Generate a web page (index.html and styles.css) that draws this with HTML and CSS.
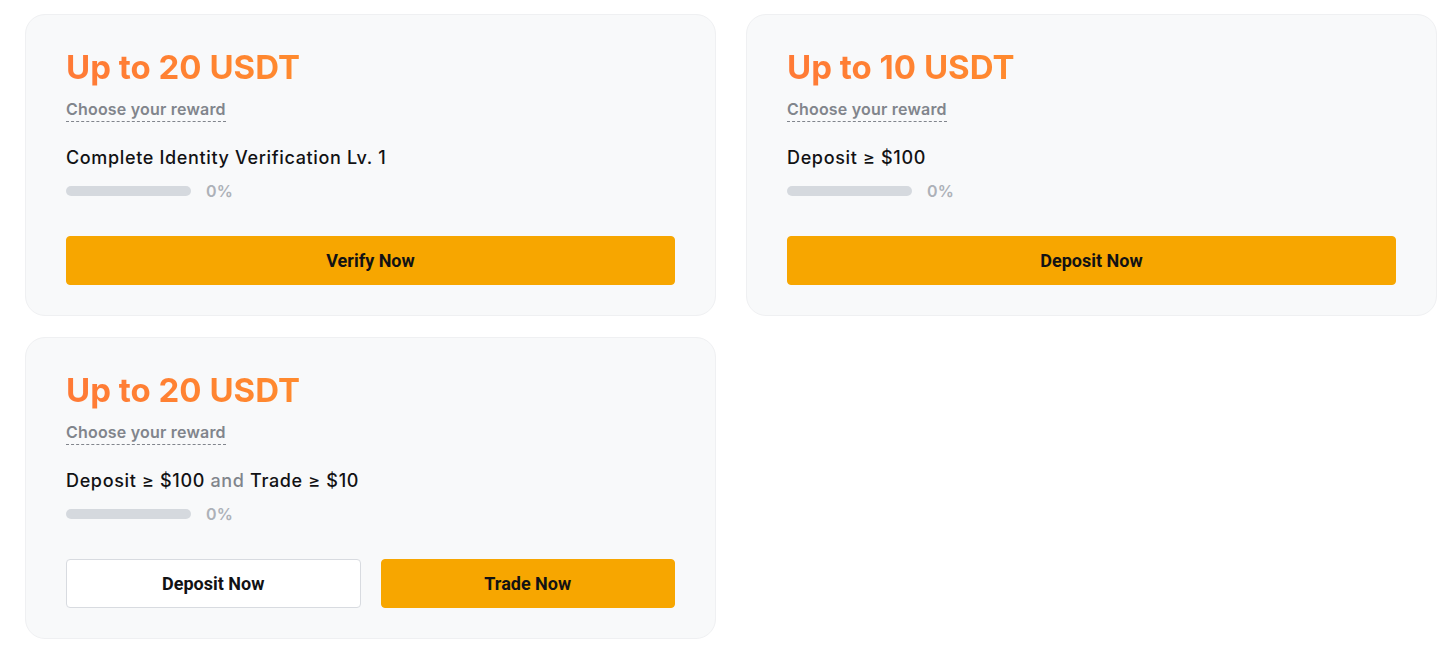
FILE: index.html
```html
<!DOCTYPE html>
<html lang="en">
<head>
<meta charset="utf-8">
<title>Rewards</title>
<link rel="stylesheet" href="styles.css">
</head>
<body>
<div class="grid">
  <section class="card">
    <h2 class="amount">Up to 20 USDT</h2>
    <div class="choose"><span>Choose your reward</span></div>
    <p class="task">Complete Identity Verification Lv. 1</p>
    <div class="progress"><div class="track"></div><span class="pct">0%</span></div>
    <div class="actions"><button class="btn primary">Verify Now</button></div>
  </section>
  <section class="card">
    <h2 class="amount">Up to 10 USDT</h2>
    <div class="choose"><span>Choose your reward</span></div>
    <p class="task">Deposit ≥ $100</p>
    <div class="progress"><div class="track"></div><span class="pct">0%</span></div>
    <div class="actions"><button class="btn primary">Deposit Now</button></div>
  </section>
  <section class="card">
    <h2 class="amount">Up to 20 USDT</h2>
    <div class="choose"><span>Choose your reward</span></div>
    <p class="task">Deposit ≥ $100 <span class="and">and</span> Trade ≥ $10</p>
    <div class="progress"><div class="track"></div><span class="pct">0%</span></div>
    <div class="actions"><button class="btn secondary">Deposit Now</button><button class="btn primary">Trade Now</button></div>
  </section>
</div>
</body>
</html>
```
FILE: styles.css
```css
* { box-sizing: border-box; }
body {
  margin: 0;
  background: #ffffff;
  font-family: Inter, "Noto Sans", "Liberation Sans", sans-serif;
  color: #121214;
}
.grid {
  display: grid;
  grid-template-columns: 691px 691px;
  column-gap: 30px;
  row-gap: 21px;
  padding: 14px 16px 0 25px;
}
.card {
  background: #f8f9fa;
  border: 1px solid #eff0f2;
  border-radius: 20px;
  padding: 32px 40px 30px 40px;
}
.amount {
  margin: 0;
  font-size: 33px;
  line-height: 40px;
  font-weight: 700;
  color: #ff7b36;
  background: linear-gradient(90deg, #ff7a36, #ff8a2e);
  -webkit-background-clip: text;
  background-clip: text;
  -webkit-text-fill-color: transparent;
  display: inline-block;
}
.choose {
  margin-top: 10px;
}
.choose span {
  display: inline-block;
  font-size: 16px;
  line-height: 24px;
  font-weight: 600;
  letter-spacing: 0.2px;
  color: #81858c;
  border-bottom: 1px dashed #81858c;
}
.task {
  margin: 23px 0 0 0;
  font-size: 18px;
  line-height: 26px;
  font-weight: 500;
  letter-spacing: 0.65px;
  color: #121214;
}
.and { color: #81858c; }
.progress {
  margin-top: 8px;
  display: flex;
  align-items: center;
  gap: 15px;
  height: 24px;
}
.track {
  width: 125px;
  height: 10px;
  border-radius: 5px;
  background: #d5d9de;
}
.pct {
  font-size: 16px;
  font-weight: 600;
  letter-spacing: 0.3px;
  color: #adb1b8;
}
.actions {
  margin-top: 33px;
  display: flex;
  gap: 20px;
}
.btn {
  flex: 1 1 0;
  height: 49px;
  border-radius: 4px;
  font-family: Roboto, "Liberation Sans", sans-serif;
  font-size: 18px;
  font-weight: 700;
  color: #121214;
  cursor: pointer;
}
.primary {
  background: #f7a600;
  border: 1px solid #f7a600;
}
.secondary {
  background: #ffffff;
  border: 1px solid #d8dbe0;
}
```
